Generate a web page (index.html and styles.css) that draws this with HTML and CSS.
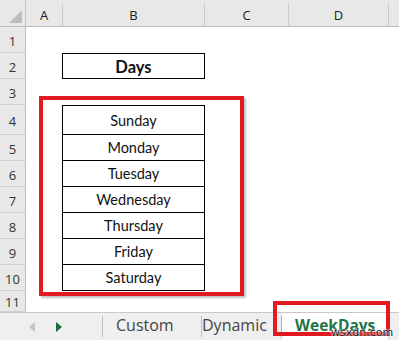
FILE: index.html
```html
<!DOCTYPE html>
<html lang="en">
<head>
  <meta charset="UTF-8">
  <title>WeekDays</title>
  <link rel="stylesheet" href="styles.css">
</head>
<body>
  <div class="sheet">
    <div class="row head">
      <div class="corner"><span class="tri"></span></div>
      <div class="col">A</div>
      <div class="col">B</div>
      <div class="col">C</div>
      <div class="col">D</div>
      <div class="col last"></div>
    </div>
    <div class="row"><div class="num">1</div><div></div><div></div></div>
    <div class="row"><div class="num">2</div><div></div><div class="cell title">Days</div></div>
    <div class="row"><div class="num">3</div><div></div><div></div></div>
    <div class="row tall"><div class="num">4</div><div></div><div class="cell first">Sunday</div></div>
    <div class="row"><div class="num">5</div><div></div><div class="cell">Monday</div></div>
    <div class="row"><div class="num">6</div><div></div><div class="cell">Tuesday</div></div>
    <div class="row"><div class="num">7</div><div></div><div class="cell">Wednesday</div></div>
    <div class="row"><div class="num">8</div><div></div><div class="cell">Thursday</div></div>
    <div class="row"><div class="num">9</div><div></div><div class="cell">Friday</div></div>
    <div class="row"><div class="num">10</div><div></div><div class="cell">Saturday</div></div>
    <div class="row short"><div class="num">11</div><div></div><div></div></div>

    <div class="mark"></div>
  </div>

  <div class="tabs">
    <div class="arrows">
      <span class="arrow left"></span>
      <span class="arrow right"></span>
    </div>
    <div class="tab">Custom</div>
    <div class="tab">Dynamic</div>
    <div class="tab active">WeekDays</div>
    <div class="tab-mark"></div>
    <span class="watermark">wsxdn.com</span>
  </div>
</body>
</html>
```

FILE: styles.css
```css
/* Page */
body {
  margin: 0;
  width: 399px;
  height: 340px;
  overflow: hidden;
  background: #fff;
  font-family: Lato, "Open Sans", sans-serif;
  color: #111;
}

.sheet {
  position: relative;
  height: 312px;
  overflow: hidden;
}

/* Rows */
.row {
  display: grid;
  grid-template-columns: 26px 37px 142px 84px 100px 10px;
  height: 26px;
}

.row.tall {
  height: 30px;
}

.row.short {
  height: 21px;
}

.row.head {
  height: 27px;
  background: #e8e8e8;
  border-bottom: 1px solid #bdbdbd;
  box-sizing: border-box;
}

.corner {
  position: relative;
  border-right: 1px solid #c4c4c4;
}

.tri {
  position: absolute;
  right: 3px;
  bottom: 3px;
  width: 0;
  height: 0;
  border-left: 13px solid transparent;
  border-bottom: 13px solid #bcbcbc;
}

.col {
  display: flex;
  align-items: center;
  justify-content: center;
  font-family: "Open Sans", sans-serif;
  font-size: 13px;
  color: #222;
  border-right: 1px solid #cacaca;
  margin-top: 4px;
}

.col.last {
  border-right: none;
}

/* Row numbers */
.num {
  display: flex;
  align-items: center;
  justify-content: center;
  background: #e8e8e8;
  border-right: 1px solid #bdbdbd;
  border-bottom: 1px solid #cfcfcf;
  font-family: "Open Sans", sans-serif;
  font-size: 13px;
  color: #333;
  padding-top: 2px;
  box-sizing: border-box;
}

/* Table cells */
.cell {
  display: flex;
  align-items: center;
  justify-content: center;
  font-size: 14.5px;
  border: 1px solid #000;
  border-top: none;
  margin-left: -1px;
  box-sizing: border-box;
}

.cell.first {
  border-top: 1px solid #000;
}

.title {
  border-top: 1px solid #000;
  font-weight: bold;
  font-size: 16.5px;
  padding-top: 1px;
}

/* Red highlight around the list */
.mark {
  position: absolute;
  left: 39px;
  top: 96px;
  width: 197px;
  height: 192px;
  border: 4px solid #e01a1f;
  box-shadow: 2px 2px 2px rgba(0, 0, 0, 0.25);
}

/* Sheet tabs */
.tabs {
  position: relative;
  display: flex;
  height: 28px;
  background: #efefef;
  border-top: 1px solid #c8c8c8;
  box-sizing: border-box;
  font-family: "Open Sans", sans-serif;
  font-size: 16px;
  color: #444;
}

.arrows {
  display: flex;
  align-items: center;
  gap: 21px;
  width: 103px;
  padding-left: 29px;
  box-sizing: border-box;
  border-right: 1px solid #bfbfbf;
  margin: 3px 0;
}

.arrow {
  width: 0;
  height: 0;
  border-top: 5px solid transparent;
  border-bottom: 5px solid transparent;
}

.arrow.left {
  border-right: 6px solid #c4c4c4;
}

.arrow.right {
  border-left: 6px solid #1e6b3a;
}

.tab {
  display: flex;
  align-items: center;
  padding: 0 13px 4px;
  width: 99px;
  box-sizing: border-box;
  border-right: 1px solid #bfbfbf;
  margin: 3px 0;
  line-height: 1;
}

.tab:nth-child(3) {
  width: 80px;
  padding: 0 0 4px 0;
}

.tab.active {
  margin: 0;
  width: 106px;
  background: #fff;
  color: #217346;
  font-weight: bold;
  font-size: 15.5px;
  padding: 0 0 1px 13px;
  border-right: none;
  box-shadow: 0 2px 2px rgba(0, 0, 0, 0.2);
}

.tab-mark {
  position: absolute;
  left: 273px;
  top: -12px;
  width: 109px;
  height: 27px;
  border: 4px solid #e01a1f;
}

.watermark {
  position: absolute;
  left: 331px;
  top: 13px;
  font-family: "DejaVu Sans", sans-serif;
  font-size: 11px;
  color: #222;
  text-shadow: 0 0 2px #fff, 0 0 2px #fff;
}
```
